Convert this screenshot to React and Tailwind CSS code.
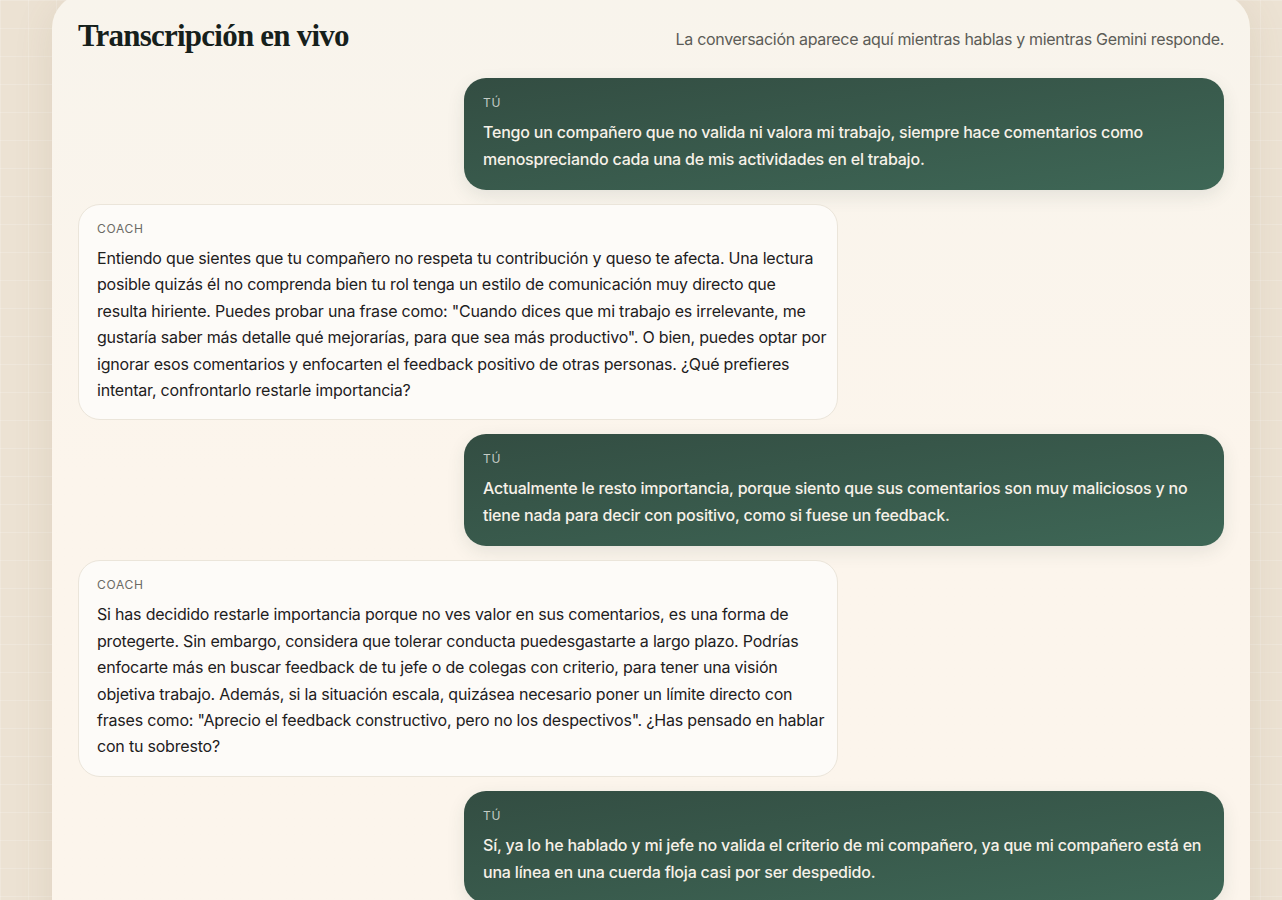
const messages = [
  {
    role: 'user',
    lines: [
      'Tengo un compañero que no valida ni valora mi trabajo, siempre hace comentarios como',
      'menospreciando cada una de mis actividades en el trabajo.',
    ],
  },
  {
    role: 'coach',
    lines: [
      'Entiendo que sientes que tu compañero no respeta tu contribución y queso te afecta. Una lectura',
      'posible quizás él no comprenda bien tu rol tenga un estilo de comunicación muy directo que',
      'resulta hiriente. Puedes probar una frase como: "Cuando dices que mi trabajo es irrelevante, me',
      'gustaría saber más detalle qué mejorarías, para que sea más productivo". O bien, puedes optar por',
      'ignorar esos comentarios y enfocarten el feedback positivo de otras personas. ¿Qué prefieres',
      'intentar, confrontarlo restarle importancia?',
    ],
  },
  {
    role: 'user',
    lines: [
      'Actualmente le resto importancia, porque siento que sus comentarios son muy maliciosos y no',
      'tiene nada para decir con positivo, como si fuese un feedback.',
    ],
  },
  {
    role: 'coach',
    lines: [
      'Si has decidido restarle importancia porque no ves valor en sus comentarios, es una forma de',
      'protegerte. Sin embargo, considera que tolerar conducta puedesgastarte a largo plazo. Podrías',
      'enfocarte más en buscar feedback de tu jefe o de colegas con criterio, para tener una visión',
      'objetiva trabajo. Además, si la situación escala, quizásea necesario poner un límite directo con',
      'frases como: "Aprecio el feedback constructivo, pero no los despectivos". ¿Has pensado en hablar',
      'con tu sobresto?',
    ],
  },
  {
    role: 'user',
    lines: [
      'Sí, ya lo he hablado y mi jefe no valida el criterio de mi compañero, ya que mi compañero está en',
      'una línea en una cuerda floja casi por ser despedido.',
    ],
  },
];

const Bubble = ({ role, lines }) => {
  const isUser = role === 'user';
  return (
    <div className={`flex ${isUser ? 'justify-end' : 'justify-start'}`}>
      <div
        className={`w-[760px] rounded-[22px] ${
          isUser
            ? 'px-[19px] pt-[17px] pb-[17px] bg-gradient-to-br from-[#334d42] to-[#3e6756] text-[#f7f1e8] shadow-[0_6px_18px_rgba(40,70,55,0.10)]'
            : 'px-[18px] pt-[16px] pb-[16px] bg-[#fdfbf8] border border-[#ebe5da] text-[#1e201d]'
        }`}
      >
        <div
          className={`text-[12px] leading-4 tracking-[0.06em] ${
            isUser ? 'text-[#c4ccc6]' : 'text-[#6b6a65]'
          }`}
        >
          {isUser ? 'TÚ' : 'COACH'}
        </div>
        <div
          className={`mt-2 text-[16px] tracking-[-0.0125em] ${
            isUser ? 'leading-[27px] font-medium' : 'leading-[26.4px]'
          }`}
        >
          {lines.map((l, i) => (
            <div key={i} className="whitespace-nowrap">
              {l}
            </div>
          ))}
        </div>
      </div>
    </div>
  );
};

export default function App() {
  return (
    <div
      className="h-[900px] overflow-hidden bg-[#ece2d3] bg-[linear-gradient(rgba(255,255,255,0.18)_1px,transparent_1px),linear-gradient(90deg,rgba(255,255,255,0.18)_1px,transparent_1px)] bg-[size:28px_28px] pl-[52px] pr-[32px]"
      style={{ fontFamily: 'Inter, "Noto Sans", sans-serif' }}
    >
      <div className="-mt-[6px] min-h-[960px] rounded-[34px] bg-gradient-to-b from-[#f8f4ec] via-[#fcf5ec] to-[#fcf5ec] px-[26px] pt-[22px] shadow-[0_10px_40px_rgba(120,95,60,0.12)]">
        <div className="flex items-start justify-between">
          <h1
            className="text-[31px] font-bold leading-[40px] tracking-[-0.025em] text-[#16201b]"
            style={{ fontFamily: '"Liberation Serif", "DejaVu Serif", serif' }}
          >
            Transcripción en vivo
          </h1>
          <p className="mt-[11px] text-[16px] leading-6 tracking-[-0.02em] text-[#5c5c57]">
            La conversación aparece aquí mientras hablas y mientras Gemini responde.
          </p>
        </div>
        <div className="mt-[22px] flex flex-col gap-[14px]">
          {messages.map((m, i) => (
            <Bubble key={i} {...m} />
          ))}
        </div>
      </div>
    </div>
  );
}
